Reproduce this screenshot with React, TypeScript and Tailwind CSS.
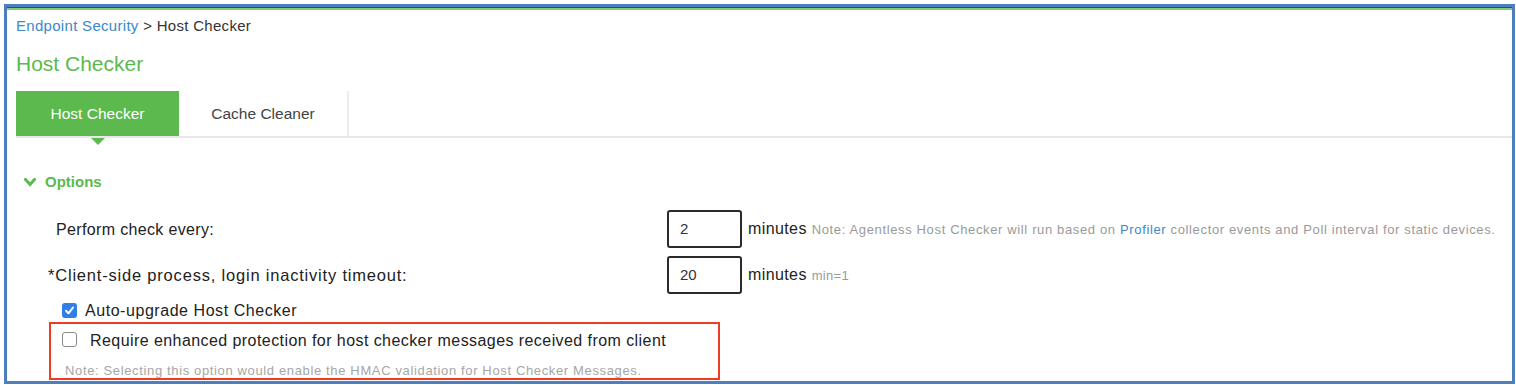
const font = { fontFamily: '"Liberation Sans", Arial, Helvetica, sans-serif' };

const Chevron = () => (
  <svg width="12" height="9" viewBox="0 0 12 9" className="shrink-0">
    <polyline
      points="1.5,1.5 6,6.5 10.5,1.5"
      fill="none"
      stroke="#5cb94d"
      strokeWidth="3"
      strokeLinecap="square"
    />
  </svg>
);

const Checkbox = ({ checked }: { checked?: boolean }) =>
  checked ? (
    <div className="w-[15px] h-[15px] rounded-[3px] bg-[#2f7fe6] flex items-center justify-center shrink-0">
      <svg width="11" height="11" viewBox="0 0 11 11">
        <polyline
          points="2,5.8 4.5,8.3 9,2.5"
          fill="none"
          stroke="white"
          strokeWidth="2"
          strokeLinecap="round"
          strokeLinejoin="round"
        />
      </svg>
    </div>
  ) : (
    <div className="w-[15px] h-[15px] rounded-[3px] border border-[#8a8a8a] bg-white shrink-0" />
  );

const NumberBox = ({ value }: { value: string }) => (
  <div className="w-[75px] h-[38px] border-2 border-[#2b2b2b] rounded-[3px] flex items-center pl-[11px] text-[15px] text-[#333] shrink-0">
    {value}
  </div>
);

export default function App() {
  return (
    <div className="w-[1516px] h-[385px] bg-white pt-[4px] pl-[4px] pr-[1px]" style={font}>
      <div className="h-[380px] border-[3px] border-[#4d7fc0] overflow-hidden flex flex-col">
        <div className="h-px bg-[#35553a]" />
        <div className="h-[2px] bg-[#7fcb72]" />

        <div className="pl-[9px] flex flex-col">
          <div className="mt-[6px] h-[20px] leading-[20px] text-[15px] tracking-[0.3px] text-[#333]">
            <span className="text-[#3d88c9]">Endpoint Security</span> &gt; Host Checker
          </div>

          <h1 className="mt-[14px] h-[28px] leading-[28px] text-[21px] text-[#5cb94d]">Host Checker</h1>

          {/* tabs */}
          <div className="mt-[13px] flex border-b-2 border-[#e8e8e8] relative">
            <div className="w-[163px] h-[45px] bg-[#5cb94d] text-white text-[15.5px] flex items-center justify-center relative">
              Host Checker
              <div className="absolute left-1/2 -translate-x-1/2 top-full mt-[2px] w-0 h-0 border-l-[7px] border-r-[7px] border-t-[7px] border-l-transparent border-r-transparent border-t-[#5cb94d]" />
            </div>
            <div className="w-[170px] h-[45px] text-[#444] text-[15.5px] flex items-center justify-center border-r-2 border-[#ececec]">
              Cache Cleaner
            </div>
          </div>

          {/* options */}
          <div className="mt-[34px] pl-[8px] flex items-center gap-[9px] h-[20px]">
            <Chevron />
            <span className="text-[15px] font-bold text-[#5cb94d]">Options</span>
          </div>

          <div className="mt-[18px] flex flex-col gap-[8px] pl-[32px]">
            <div className="flex items-center">
              <div className="w-[619px] pl-[8px] mt-[2px] text-[16px] tracking-[0.35px] text-[#222]">
                Perform check every:
              </div>
              <NumberBox value="2" />
              <div className="ml-[6px] text-[16px] tracking-[0.4px] text-[#222]">
                minutes{" "}
                <span className="text-[13px] tracking-[0.64px] text-[#9a9a9a]">
                  Note: Agentless Host Checker will run based on{" "}
                  <span className="text-[#3d88c9]">Profiler</span> collector events and Poll interval for static devices.
                </span>
              </div>
            </div>
            <div className="flex items-center">
              <div className="w-[619px] mt-[1px] text-[16.5px] tracking-[0.8px] text-[#222]">
                *Client-side process, login inactivity timeout:
              </div>
              <NumberBox value="20" />
              <div className="ml-[6px] text-[16px] tracking-[0.4px] text-[#222]">
                minutes <span className="text-[13px] tracking-[0.3px] text-[#9a9a9a]">min=1</span>
              </div>
            </div>
          </div>

          <div className="mt-[6px] pl-[46px] flex items-center gap-[8px] h-[20px]">
            <Checkbox checked />
            <span className="text-[16px] tracking-[0.55px] text-[#222] mt-[1px]">Auto-upgrade Host Checker</span>
          </div>

          <div className="mt-[2px] ml-[33px] w-[671px] h-[58px] border-2 border-[#ee3b24] flex flex-col">
            <div className="mt-[5px] pl-[11px] flex items-center gap-[13px] h-[20px]">
              <Checkbox />
              <span className="text-[16px] tracking-[0.43px] text-[#222] mt-[3px]">
                Require enhanced protection for host checker messages received from client
              </span>
            </div>
            <div className="mt-[14px] pl-[14px] text-[13px] tracking-[0.64px] text-[#a6a6a6] leading-[16px]">
              Note: Selecting this option would enable the HMAC validation for Host Checker Messages.
            </div>
          </div>
        </div>
      </div>
    </div>
  );
}
